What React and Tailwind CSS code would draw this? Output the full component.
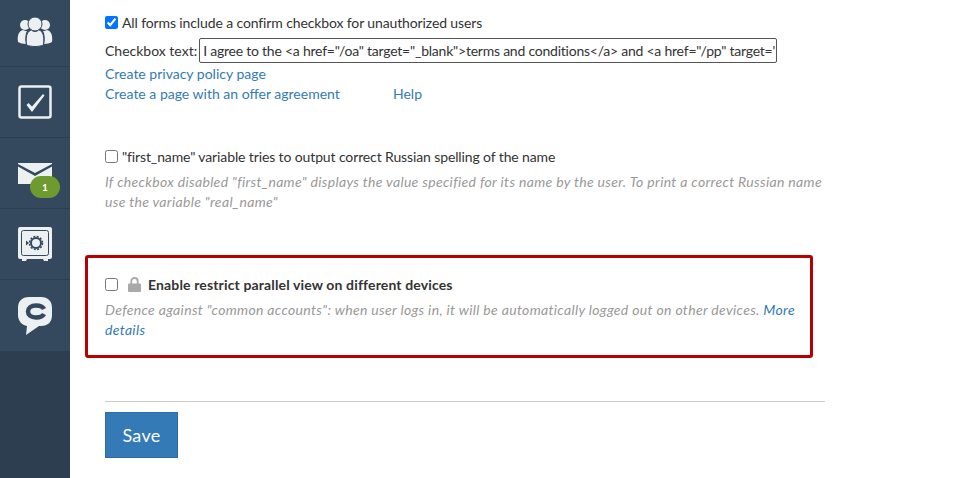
function Users() {
    return (
        <svg width="36" height="31" viewBox="0 0 36 31" fill="#ecf0f1">
            <circle cx="8" cy="9" r="5" />
            <circle cx="28" cy="9" r="5" />
            <path d="M1 26c-1-7 1-11 5-12 2 1 3 1 4 1l-1 2c-1 4-1 8 0 11-3 0-6-1-8-2zM35 26c1-7-1-11-5-12-2 1-3 1-4 1l1 2c1 4 1 8 0 11 3 0 6-1 8-2z" />
            <circle cx="18" cy="8" r="7" stroke="#34495e" strokeWidth="1" />
            <path d="M10.500 17c2-2 3-3 4-3 2 2 5 2 7 0 1 0 3 1 4 3 1.500 3 1.500 8 1 12-5 2-12 2-17 0-.500-4-.500-9 1-12z" stroke="#34495e" strokeWidth="1" />
        </svg>
    );
}

function Check() {
    return (
        <svg width="34" height="34" viewBox="0 0 34 34" fill="none">
            <rect x="1.500" y="1.500" width="31" height="31" rx="2" stroke="#ecf0f1" strokeWidth="2.500" />
            <path d="M8.500 20l2-2 3.500 3.500L25 9l1.500 1.500L14 27z" fill="#ecf0f1" />
        </svg>
    );
}

function Mail() {
    return (
        <svg width="34" height="21" viewBox="0 0 34 21" fill="#ecf0f1">
            <path d="M0 0h34v1L17 10 0 1z" />
            <path d="M0 3.500l17 9.500 17-9.500V21H0z" />
        </svg>
    );
}

function Safe() {
    return (
        <svg width="34" height="34" viewBox="0 0 34 34">
            <path d="M2 0h30a2 2 0 0 1 2 2v28a2 2 0 0 1-2 2h-2v2h-4l-1-2H9l-1 2H4v-2H2a2 2 0 0 1-2-2V2a2 2 0 0 1 2-2z" fill="#ecf0f1" />
            <rect x="3.500" y="3.500" width="27" height="25" rx="2" fill="none" stroke="#34495e" strokeWidth="1" />
            <circle cx="18" cy="16" r="5" fill="none" stroke="#34495e" strokeWidth="2" />
            <circle cx="18" cy="16" r="6.500" fill="none" stroke="#34495e" strokeWidth="1.500" strokeDasharray="2 1.400" />
            <path d="M8 13.500l3 2.500-3 2.500z" fill="#34495e" />
        </svg>
    );
}

function Chat() {
    return (
        <svg width="34" height="38" viewBox="0 0 34 38">
            <path d="M11 0h12c7 0 11 4 11 11v7c0 7-4 11-11 11h-2l-13 9 1-9c-5-1-9-5-9-11v-7C0 4 4 0 11 0z" fill="#ecf0f1" />
            <path d="M26 12c-1-2-3-3.500-8-3.500-5 0-8 2.500-8 6s3 6 8 6c5 0 7-1.500 8-3.500" fill="none" stroke="#34495e" strokeWidth="4.500" />
        </svg>
    );
}

function Lock() {
    return (
        <svg width="13" height="15" viewBox="0 0 13 15" fill="#a9a9a9">
            <path d="M3.300 7V4.200a3.200 3.200 0 0 1 6.400 0V7" fill="none" stroke="#a9a9a9" strokeWidth="1.800" />
            <rect x="0" y="6.500" width="13" height="8.500" rx="1" />
        </svg>
    );
}

export default function App() {
    return (
        <div className="flex h-[478px] w-[960px] overflow-hidden bg-white font-['Lato','Liberation_Sans',sans-serif] text-[14px] text-[#333]">

            {/* SIDEBAR */}
            <aside className="flex w-[70px] shrink-0 flex-col bg-[#2c3e50]">
                <div className="flex h-[67px] items-center justify-center border-b border-[#2c3e50] bg-[#34495e] pb-1">
                    <Users />
                </div>
                <div className="flex h-[71px] items-center justify-center border-b border-[#2c3e50] bg-[#34495e]">
                    <Check />
                </div>
                <div className="relative flex h-[71px] items-start justify-center border-b border-[#2c3e50] bg-[#34495e] pt-[25px]">
                    <Mail />
                    <span className="absolute left-[30px] top-[38px] flex h-[22px] w-[30px] items-center justify-center rounded-[11px] bg-[#6f9a2f] text-[10px] font-bold text-white">
                        1
                    </span>
                </div>
                <div className="flex h-[71px] items-center justify-center border-b border-[#2c3e50] bg-[#34495e]">
                    <Safe />
                </div>
                <div className="flex h-[71px] items-center justify-center bg-[#34495e]">
                    <Chat />
                </div>
            </aside>

            {/* CONTENT */}
            <main className="w-[720px] pl-[35px]">
                <label className="mt-[12px] flex h-[20px] items-center tracking-[-0.12px]">
                    <input type="checkbox" defaultChecked className="mr-[4px] h-[13px] w-[13px]" />
                    <span>All forms include a confirm checkbox for unauthorized users</span>
                </label>

                <div className="mb-[1px] mt-[6px] flex h-[25px] items-center">
                    <span className="mr-[2px]">Checkbox text:</span>
                    <div className="h-[25px] w-[578px] overflow-hidden whitespace-nowrap rounded-[2px] border border-[#555] px-[3px] leading-[23px] tracking-[-0.23px]">
                        I agree to the &lt;a href="/oa" target="_blank"&gt;terms and conditions&lt;/a&gt; and &lt;a href="/pp" target='
                    </div>
                </div>

                <a className="block h-[20px] leading-[20px] text-[#337ab7]">Create privacy policy page</a>
                <div className="flex h-[20px] leading-[20px] text-[#337ab7]">
                    <a className="w-[288px]">Create a page with an offer agreement</a>
                    <a>Help</a>
                </div>

                <label className="mt-[42px] flex h-[20px] items-center tracking-[-0.12px]">
                    <input type="checkbox" className="mr-[4px] h-[13px] w-[13px]" />
                    <span>"first_name" variable tries to output correct Russian spelling of the name</span>
                </label>
                <p className="mt-[6px] w-[720px] italic leading-[20px] tracking-[0.33px] text-[#999]">
                    If checkbox disabled "first_name" displays the value specified for its name by the user. To print a correct Russian name use the variable "real_name"
                </p>

                {/* RESTRICT BOX */}
                <section className="-ml-[20px] mt-[43px] h-[103px] w-[728px] rounded-[3px] border-[3px] border-[#b80000] pl-[17px] pr-[10px] pt-[16px]">
                    <div className="flex h-[20px] items-center">
                        <input type="checkbox" className="mr-[10px] h-[13px] w-[13px]" />
                        <Lock />
                        <b className="ml-[7px] font-bold tracking-[0.14px] text-[#333]">Enable restrict parallel view on different devices</b>
                    </div>
                    <p className="mt-[6px] italic leading-[20px] tracking-[0.33px] text-[#999]">
                        Defence against "common accounts": when user logs in, it will be automatically logged out on other devices. <a className="text-[#337ab7]">More details</a>
                    </p>
                </section>

                <hr className="mt-[43px] w-[720px] border-t border-[#ccc]" />

                <button className="mt-[10px] h-[46px] w-[73px] border border-[#2e6da4] bg-[#337ab7] text-[18px] tracking-[0.3px] text-white">
                    Save
                </button>
            </main>
        </div>
    );
}
